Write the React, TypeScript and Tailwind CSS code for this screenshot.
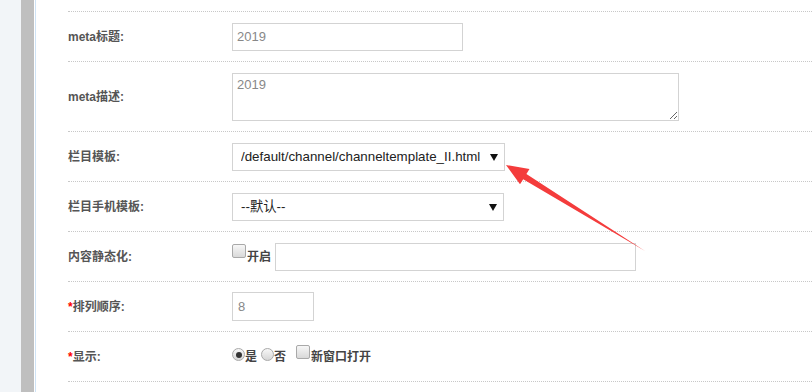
import React from 'react';

const font = { fontFamily: '"Liberation Sans", "Noto Sans CJK SC", sans-serif' };

function Row({ label, required, h = 'h-[50px]', children }: { label: string; required?: boolean; h?: string; children?: React.ReactNode }) {
  return <div className={`flex ${h} items-center border-b border-dotted border-[#c8c8c8]`}>
    <div className="w-[164px] shrink-0 text-[12px] font-bold text-[#555]">
      {required && <span className="text-[#f00]">*</span>}{label}
    </div>
    <div className="flex items-center">{children}</div>
  </div>;
}

function Box() {
  return <span className="inline-block h-[14px] w-[14px] rounded-[2px] border border-[#a9a9a9] bg-gradient-to-b from-[#f7f7f7] to-[#d9d9d9]" />;
}

function Radio({ checked }: { checked?: boolean }) {
  return <span className="flex h-[13px] w-[13px] items-center justify-center rounded-full border border-[#a9a9a9] bg-gradient-to-b from-[#f7f7f7] to-[#d6d6d6]">
    {checked && <span className="h-[6px] w-[6px] rounded-full bg-[#333]" />}
  </span>;
}

function Select({ value, w }: { value: string; w: string }) {
  return <div className={`relative ${w} h-[28px]`}>
    <select defaultValue={value} className="h-full w-full appearance-none border border-[#d3d3d3] bg-white pl-[8px] text-[13.33px] text-[#222] outline-none" style={font}>
      <option>{value}</option>
    </select>
    <svg className="pointer-events-none absolute right-[7px] top-[11px]" width="8" height="7" viewBox="0 0 8 7"><path d="M0 0h8L4 7z" fill="#111" /></svg>
  </div>;
}

export default function App() {
  return <div className="relative flex h-screen overflow-hidden bg-white" style={font}>
    <div className="w-[21px] shrink-0 bg-[#f2f5f8]" />
    <div className="w-[13px] shrink-0 bg-[#bfbfbf]" />
    <div className="w-[1px] shrink-0 bg-white" />
    <div className="w-[1px] shrink-0 bg-[#cfe3f6]" />
    <div className="flex-1 pl-[32px]">
      <div className="mt-[-38px]">
        <Row label="">
          <input className="mt-[-12px] h-[28px] w-[141px] border border-[#d3d3d3]" readOnly />
        </Row>
        <Row label="meta标题:">
          <input defaultValue="2019" className="h-[28px] w-[231px] border border-[#d3d3d3] pl-[4px] text-[13px] text-[#888] outline-none" style={font} />
        </Row>
        <Row label="meta描述:" h="h-[70px]">
          <textarea defaultValue="2019" className="h-[48px] w-[447px] border border-[#d3d3d3] pl-[4px] pt-[4px] text-[13px] leading-[14px] text-[#888] outline-none" style={font} />
        </Row>
        <Row label="栏目模板:">
          <Select value="/default/channel/channeltemplate_II.html" w="w-[273px]" />
        </Row>
        <Row label="栏目手机模板:">
          <Select value="--默认--" w="w-[272px]" />
        </Row>
        <Row label="内容静态化:">
          <span className="mt-[-8px]"><Box /></span>
          <span className="mr-[4px] ml-[1px] text-[12px] font-bold text-[#444]">开启</span>
          <input className="h-[28px] w-[361px] border border-[#d3d3d3] outline-none" readOnly />
        </Row>
        <Row label="排列顺序:" required>
          <input defaultValue="8" className="h-[29px] w-[82px] border border-[#d3d3d3] pl-[5px] text-[13px] text-[#888] outline-none" style={font} />
        </Row>
        <Row label="显示:" required>
          <span className="mt-[-4px]"><Radio checked /></span>
          <span className="mr-[4px] text-[12px] font-bold text-[#444]">是</span>
          <span className="mt-[-4px]"><Radio /></span>
          <span className="mr-[10px] text-[12px] font-bold text-[#444]">否</span>
          <span className="mt-[-6px] mr-[1px]"><Box /></span>
          <span className="text-[12px] font-bold text-[#444]">新窗口打开</span>
        </Row>
      </div>
    </div>
    <svg className="pointer-events-none absolute left-0 top-0" width="812" height="392">
      <polygon points="506,165 529.5,168.9 526.4,174 645.4,251.3 644.6,250.7 523.2,179.2 520,184.3" fill="#f43c3c" />
    </svg>
  </div>;
}
